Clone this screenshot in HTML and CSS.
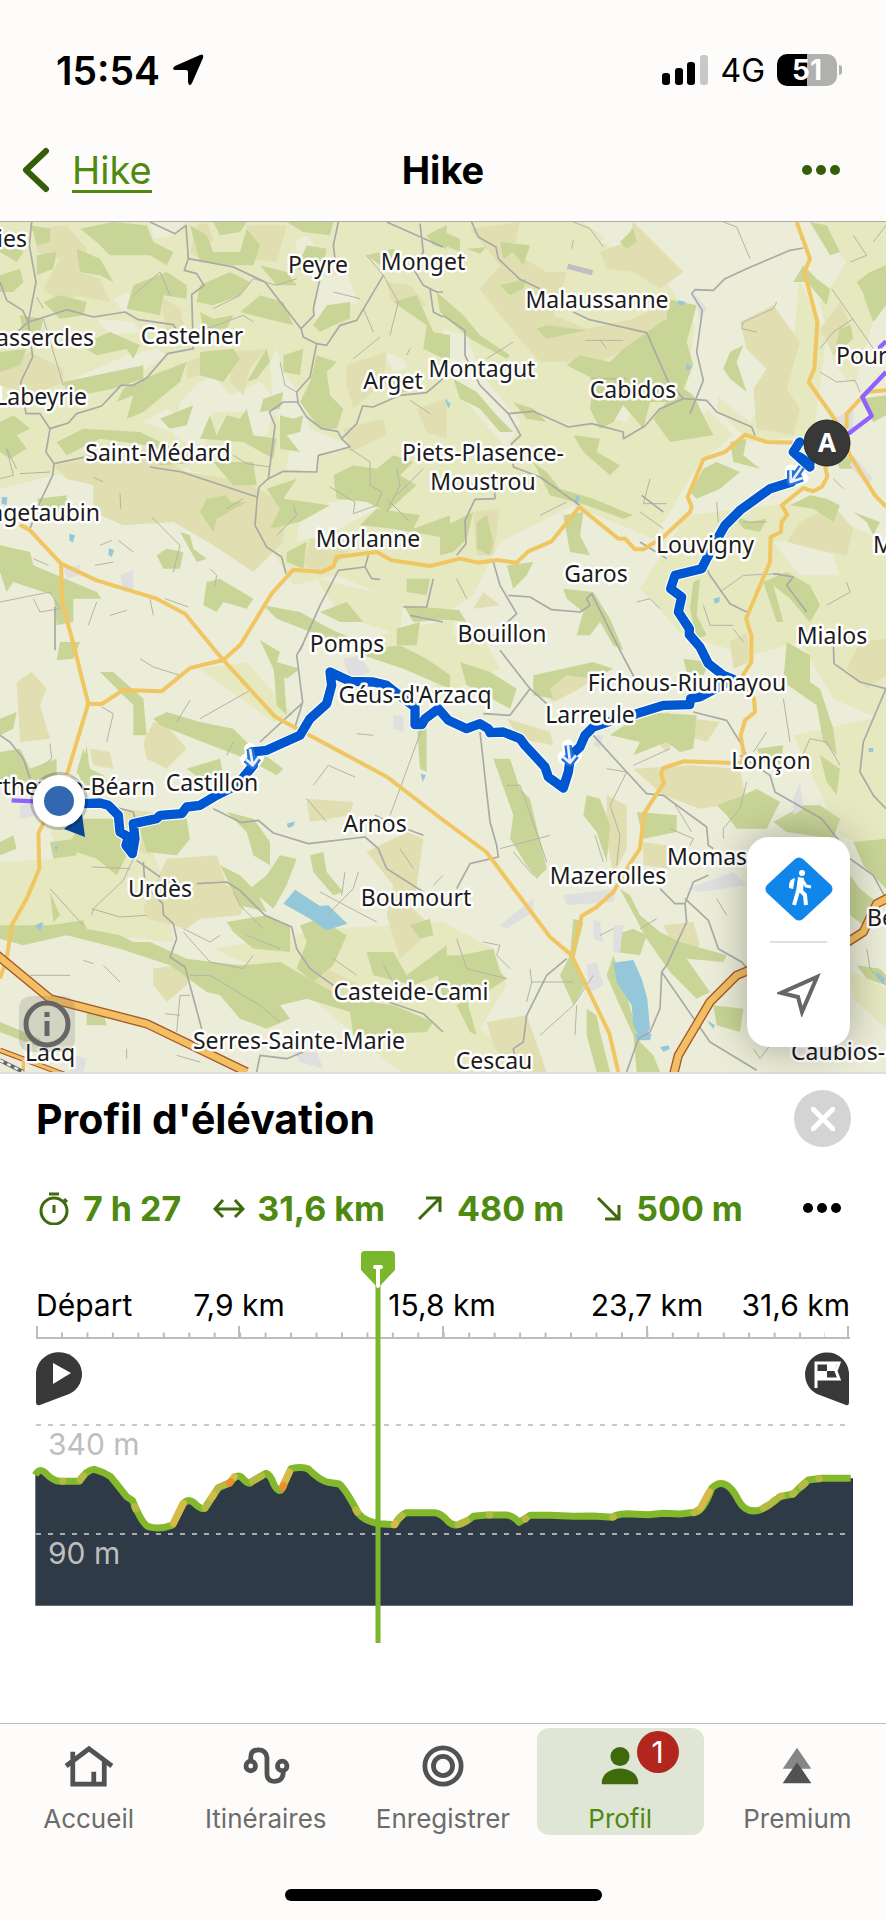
FILE: index.html
```
<!DOCTYPE html>
<html lang="fr">
<head>
    <meta charset="utf-8">
    <meta name="viewport" content="width=device-width, initial-scale=1.0">
    <title>Hike</title>
    <link rel="stylesheet" href="styles.css">
</head>
<body>
    <header>
        <div class="status">
            <div class="status-left">
                <span class="clock">15:54</span>
                <svg width="32" height="32" viewBox="0 0 32 32"><path d="M28 1Q32-1 31 4L20 29Q17 34 16 28V18Q16 16 14 16H3Q-1 15 3 12Z"/></svg>
            </div>
            <div class="status-right">
                <svg width="46" height="30" viewBox="0 0 46 30">
                    <rect x="0" y="18" width="8" height="12" rx="3"/>
                    <rect x="13" y="13" width="8" height="17" rx="3"/>
                    <rect x="25" y="7" width="8" height="23" rx="3"/>
                    <rect x="38" y="0" width="8" height="30" rx="3" fill="#c8c8c8"/>
                </svg>
                <span class="network">4G</span>
                <span class="battery">51</span>
            </div>
        </div>
        <nav class="navbar">
            <a class="back" href="#">
                <svg width="28" height="46" viewBox="0 0 28 46"><path d="M24 4 L4 23 L24 42" fill="none" stroke="#355e08" stroke-width="6" stroke-linecap="round" stroke-linejoin="round"/></svg>
                <span>Hike</span>
            </a>
            <h1>Hike</h1>
            <button class="more" aria-label="Plus">
                <svg width="38" height="10" viewBox="0 0 38 10" fill="#355e08"><circle cx="5" cy="5" r="5"/><circle cx="19" cy="5" r="5"/><circle cx="33" cy="5" r="5"/></svg>
            </button>
        </nav>
    </header>

    <main>
        <section class="map">
            <svg class="map-canvas" viewBox="0 0 886 850">
                <rect width="886" height="850" fill="#ebedd8"/>
                <svg width="886" height="850" viewBox="0 0 2658 2550">
                    <defs>
                        <path id="hike" d="M2399 660L2380 690 2430 735M2399 705L2430 725M2375 780L2310 800 2220 865 2175 910 2155 945 2120 1010 2105 1040 2025 1060 2012 1100 2045 1125 2035 1170 2068 1220 2068 1238 2100 1275 2125 1325 2170 1360 2200 1372 2100 1425 2072 1430 2069 1448 1990 1450 1910 1475 1830 1498 1780 1515 1755 1540 1740 1575 1712 1600 1705 1650 1690 1698 1645 1665 1635 1635 1575 1570 1560 1550 1510 1530 1470 1532 1465 1520 1440 1505 1400 1520 1345 1495 1315 1460 1275 1490 1265 1508 1245 1508 1245 1455 1210 1430 1160 1390 1120 1380 1050 1378 990 1350 995 1390 980 1445 930 1490 900 1540 800 1585 755 1590 760 1630 710 1690 650 1720 600 1750 560 1755 545 1775 480 1780 470 1790 400 1805 405 1850 397 1895 378 1870 385 1845 360 1830 355 1780 325 1750 300 1743 250 1745"/>
                        <path id="arrows" d="M2405 735L2375 778M2372 745V780L2408 768M1704 1570L1710 1620M1690 1605L1710 1622 1728 1600M750 1580L758 1628M738 1612L758 1630 774 1608"/>
                        <path id="a65" d="M-10 2198L150 2330 440 2405 740 2550"/>
                        <path id="a64" d="M2020 2560L2035 2500 2130 2340 2210 2260 2270 2235 2450 2220 2590 2130 2630 2045 2670 2025"/>
                    </defs>
                    <!-- fields -->
                    <g class="field">
                        <path d="M0 0H1329V1180L1220 1150L1010 1060 880 1090 800 960 740 800 560 740 160 760 0 800Z"/>
                        <path d="M1329 0H1900L1800 60 2050 160 2090 260 2060 500 2200 640 2100 720 1960 950 1720 850 1500 960 1420 1120 1329 1180Z"/>
                        <path d="M2200 240L2400 180 2480 340 2440 640 2250 660 2150 560Z"/>
                        <path d="M1920 1100L2060 880 2400 840 2658 960V1500L2500 1430 2400 1260 2250 1300 2050 1240Z"/>
                        <path d="M2450 0L2658 0V160L2560 500 2500 420 2460 240 2540 120Z"/>
                        <path d="M600 1340L740 1320 880 1480 820 1500Z"/>
                        <path d="M0 1920L350 1900 500 2000 520 2160 200 2130 0 2110Z"/>
                        <path d="M640 2180L1000 2120 1329 2100 1480 2180 1520 2290 1440 2420 1600 2550H1200L900 2300Z"/>
                        <path d="M2380 1540L2658 1480V1900L2520 1840Z"/>
                        <path d="M2540 2240L2658 2300V2420L2560 2330Z"/>
                        <path d="M1140 1240L1360 1190V1290L1180 1330Z"/>
                        <path d="M950 1070L1210 1130 1200 1240 1020 1180Z"/>
                        <path d="M1329 1240L1440 1230 1500 1340 1329 1420 1260 1330Z"/>
                        <path d="M150 1820L420 1780 500 2000 200 1960Z"/>
                    </g>
                    <g class="open">
                        <path d="M600 480L640 460 690 520 780 480 830 540 800 640 740 650 730 570 640 570 610 700 520 640 540 540Z"/>
                        <path d="M810 420L830 380 850 450 900 520 930 620 1050 670 960 700 950 750 860 740 870 660 820 560Z"/>
                        <path d="M960 170L1040 150 1075 250 1030 240 980 280 940 290Z"/>
                        <path d="M885 60L920 40 950 80 940 120 890 90Z"/>
                        <path d="M220 470L380 400 470 380 500 400 440 440 280 480Z"/>
                        <path d="M340 230L380 210 410 250 370 270Z"/>
                        <path d="M900 860L1050 830 1150 850 1000 930 890 960Z"/>
                        <path d="M1150 390L1210 410 1220 440 1180 450Z"/>
                        <path d="M450 0L560 0 520 40 460 50Z"/>
                        <path d="M290 290L400 300 420 330 330 340Z"/>
                        <path d="M1329 320L1400 340 1440 450 1560 600 1520 680 1400 540 1329 400Z"/>
                        <path d="M1750 0L2300 0 2400 120 2380 400 2250 600 2150 520 2100 600 2080 300 2000 180 1830 60Z"/>
                        <path d="M1780 500L1860 470 1920 520 1880 600 1800 580Z"/>
                        <path d="M1600 1000L1800 980 1880 1100 1700 1190 1540 1130Z"/>
                        <path d="M2320 960L2480 940 2520 1060 2400 1060Z"/>
                        <path d="M2480 460L2560 480 2560 560 2500 560Z"/>
                        <path d="M500 560L560 600 540 640 430 600Z"/>
                    </g>
                    <g class="heath">
                        <path d="M110 20L200 10 260 80 240 150 300 170 330 240 230 220 190 250 130 200 180 110 110 90Z"/>
                        <path d="M590 10L620 0 640 50 600 110 570 90Z"/>
                        <path d="M740 10L860 10 830 120 760 110Z"/>
                        <path d="M0 430L90 390 190 440 190 480 100 520 0 490Z"/>
                        <path d="M690 390L800 380 750 440 730 520 690 480Z"/>
                        <path d="M160 730L430 680 560 750 740 780 860 850 850 960 760 1050 640 970 520 900 370 910 280 870 280 790 200 770Z"/>
                        <path d="M1040 430L1160 390 1150 480 1060 560 1040 490Z"/>
                        <path d="M1030 620L1150 590 1160 640 1050 690Z"/>
                        <path d="M930 950L1050 940 1040 1000 960 1060 910 1030Z"/>
                        <path d="M1160 180L1230 190 1280 250 1220 270 1170 230Z"/>
                        <path d="M1250 560L1340 530V650L1280 630Z"/>
                        <path d="M480 220L540 260 570 380 500 330Z"/>
                        <path d="M560 420L640 390 630 450 560 470Z"/>
                        <path d="M1410 20L1560 0 1540 90 1640 150 1700 150 1660 280 1760 320 1900 290 2020 230 1980 330 1800 420 1620 420 1540 330 1440 200 1500 130Z"/>
                        <path d="M1800 90L1880 60 1900 0 1960 60 2050 150 1980 200 1900 150 1820 140Z"/>
                        <path d="M2220 300L2320 250 2400 360 2360 500 2400 560 2380 640 2270 620 2260 500 2300 440 2240 380Z"/>
                        <path d="M2460 320L2520 240 2560 330 2500 400Z"/>
                        <path d="M2400 900L2500 850 2560 920 2540 1000 2480 990 2360 960Z"/>
                        <path d="M1420 870L1500 860 1480 1000 1430 1000Z"/>
                        <path d="M1450 1110L1500 1150 1420 1160Z"/>
                        <path d="M1600 1380L1700 1340 1790 1370 1720 1410 1660 1440Z"/>
                        <path d="M50 1380L95 1350 140 1400 120 1450 150 1550 60 1560Z"/>
                        <path d="M430 1560L460 1500 500 1510 560 1580 500 1640 440 1610Z"/>
                        <path d="M430 2060L500 1910 650 1900 680 1990 750 2010 720 2080 600 2090 560 2120 440 2090Z"/>
                        <path d="M460 2240L580 2220 560 2290 500 2340 460 2290Z"/>
                        <path d="M920 1730L1060 1740 1050 1780 930 1800Z"/>
                        <path d="M1100 1890L1220 1830 1270 1850 1240 2060 1300 2120 1200 2210 1160 2080 1180 1990Z"/>
                        <path d="M1900 1640L2070 1630 2220 1640 2240 1740 2100 1760 1990 1720Z"/>
                        <path d="M1930 1520L2000 1470 2060 1510 2000 1590Z"/>
                        <path d="M2080 1490L2160 1500 2120 1560 2060 1540Z"/>
                        <path d="M1820 1720L1880 1750 1880 1880 1840 1960 1820 1850Z"/>
                        <path d="M1990 2110L2080 2100 2100 2170 2040 2210Z"/>
                        <path d="M2190 1260L2240 1230 2250 1320 2200 1340Z"/>
                        <path d="M2580 1260L2658 1250V1360L2600 1400 2540 1340Z"/>
                        <path d="M1929 1860L2000 1870 2010 1940 1930 1930Z"/>
                        <path d="M1520 1490L1650 1530 1660 1570 1560 1550Z"/>
                        <path d="M270 1580L330 1590 340 1640 280 1630Z"/>
                        <path d="M1460 2400L1580 2380 1640 2550 1530 2550 1480 2470Z"/>
                        <path d="M960 2230L1080 2290 1040 2340 900 2280Z"/>
                        <path d="M360 1760L460 1770 450 1900 400 1880Z"/>
                    </g>
                    <!-- woods -->
                    <g class="wood">
                        <path d="M90 10L150 20 150 60 110 70 100 30Z"/>
                        <path d="M240 20L340 0 440 10 460 60 520 90 500 130 450 100 330 100 290 60Z"/>
                        <path d="M0 160L60 140 70 180 40 210 0 210Z"/>
                        <path d="M0 30L40 40 70 90 50 120 0 90Z"/>
                        <path d="M570 10L620 40 640 90 720 90 740 20 780 70 760 130 690 130 600 120Z"/>
                        <path d="M640 0L740 0 720 30 660 40Z"/>
                        <path d="M230 80L300 110 340 180 300 160 240 150Z"/>
                        <path d="M110 100L170 90 160 140 110 160Z"/>
                        <path d="M400 190L500 150 560 190 560 230 490 220 480 280 380 260Z"/>
                        <path d="M130 240L180 220 260 240 250 280 180 290Z"/>
                        <path d="M600 190L690 150 750 180 720 220 640 250 590 240Z"/>
                        <path d="M720 270L780 220 850 240 880 310 800 290Z"/>
                        <path d="M600 270L640 290 700 280 680 320 610 320Z"/>
                        <path d="M920 70L980 80 970 130 930 160 890 140Z"/>
                        <path d="M860 0L1000 0 990 40 910 30Z"/>
                        <path d="M780 130L860 150 890 190 830 190Z"/>
                        <path d="M980 250L1050 240 1050 290 1000 310 960 330 940 310Z"/>
                        <path d="M60 280L130 290 120 330 70 350Z"/>
                        <path d="M0 390L80 380 60 430 0 450Z"/>
                        <path d="M190 480L430 430 430 470 340 500 240 520 200 510Z"/>
                        <path d="M240 370L330 330 420 370 400 410 380 380 290 400Z"/>
                        <path d="M430 470L560 420 540 480 430 570 380 590 400 520 350 540 370 500Z"/>
                        <path d="M600 390L700 380 720 410 670 480 600 460Z"/>
                        <path d="M740 480L800 380 810 420 770 470Z"/>
                        <path d="M950 400L1010 420 980 450 990 520 1030 560 1010 620 960 620 900 540 930 480Z"/>
                        <path d="M850 400L910 380 900 460 850 450Z"/>
                        <path d="M790 530L850 510 840 560 780 570Z"/>
                        <path d="M170 660L250 620 420 630 540 690 640 690 640 720 480 730 440 670 300 650 200 700Z"/>
                        <path d="M0 600L40 580 90 620 50 640 80 680 30 710 0 690Z"/>
                        <path d="M480 590L580 550 560 610 510 620Z"/>
                        <path d="M630 580L650 640 680 580 720 590 740 560 760 640 830 650 820 710 730 660 600 650Z"/>
                        <path d="M840 580L880 590 910 580 900 630 860 640 900 690 840 680Z"/>
                        <path d="M640 720L760 720 770 790 700 790Z"/>
                        <path d="M620 830L680 820 690 840 740 840 650 890 640 930 600 870Z"/>
                        <path d="M800 800L890 770 850 830 990 850 900 900 810 920 840 860Z"/>
                        <path d="M1000 760L1060 730 1130 740 1180 700 1240 720 1200 760 1250 790 1160 870 1100 840 1010 830Z"/>
                        <path d="M1080 910L1130 860 1260 880 1240 920 1350 880V950L1180 920Z"/>
                        <path d="M1150 480L1200 470 1250 500 1180 520Z"/>
                        <path d="M1180 240L1250 220 1300 330 1350 340V420L1270 380 1280 310Z"/>
                        <path d="M1100 100L1180 80 1210 120 1170 150Z"/>
                        <path d="M1280 40L1340 10V80L1300 70Z"/>
                        <path d="M0 970L90 990 100 1030 290 1110 305 1130 220 1130 220 1200 170 1210 160 1120 40 1080 20 1110 0 1050Z"/>
                        <path d="M110 830L200 820 200 860 130 870Z"/>
                        <path d="M470 1000L500 980 550 990 540 1040 490 1040Z"/>
                        <path d="M540 930L570 940 580 980 620 1010 590 1020Z"/>
                        <path d="M620 1080L660 1070 760 1130 740 1160 670 1140 650 1170 610 1150Z"/>
                        <path d="M860 990L920 960 910 1040 860 1020Z"/>
                        <path d="M790 1150L900 1170 990 1220 1100 1270 1010 1260 830 1190Z"/>
                        <path d="M960 1170L1040 1140 1090 1200 1020 1200Z"/>
                        <path d="M1220 1070L1290 1070 1280 1120 1220 1110Z"/>
                        <path d="M1190 1220L1260 1200 1250 1270 1190 1270Z"/>
                        <path d="M1210 1150L1380 1165V1190L1240 1200Z"/>
                        <path d="M1310 20L1380 50 1380 90 1310 60Z"/>
                        <path d="M1400 80L1460 75 1440 95Z"/>
                        <path d="M1500 60L1590 70 1570 130 1540 90 1510 110Z"/>
                        <path d="M1860 60L1900 20 1910 60 1880 80Z"/>
                        <path d="M1500 190L1580 170 1570 200 1530 220Z"/>
                        <path d="M1310 210L1390 280 1440 340 1530 400 1520 410 1410 350 1320 270Z"/>
                        <path d="M1610 320L1640 310 1760 325 1640 350Z"/>
                        <path d="M2000 230L2090 250 2060 360 2080 430 2050 500 2080 520 2120 600 2140 640 2010 660 1960 590 2000 540 1950 540 1930 620 1870 550 1840 600 1800 620 1770 560 1780 470 1700 430 1740 400 1830 420 1870 380 1970 310 2000 290Z"/>
                        <path d="M2170 440L2190 390 2230 370 2210 420 2240 510 2190 470Z"/>
                        <path d="M2380 180L2410 130 2450 170 2490 200 2480 250 2420 180Z"/>
                        <path d="M2430 0L2480 10 2520 90 2490 100Z"/>
                        <path d="M2570 180L2610 150 2658 130V190L2600 230Z"/>
                        <path d="M2520 320L2550 310 2560 350 2500 400Z"/>
                        <path d="M2590 220L2658 180V250L2620 300Z"/>
                        <path d="M2580 530L2658 520V580L2620 600Z"/>
                        <path d="M1360 470L1430 510 1490 580 1540 630 1500 630 1440 560 1380 530Z"/>
                        <path d="M1540 540L1600 560 1640 600 1580 590Z"/>
                        <path d="M1720 640L1800 650 1790 690 1860 730 1830 760 1750 690Z"/>
                        <path d="M1600 720L1640 750 1680 800 1780 830 1900 880 1870 890 1760 850 1650 820Z"/>
                        <path d="M2070 810L2110 740 2150 720 2220 750 2160 800 2090 830Z"/>
                        <path d="M2190 660L2240 650 2230 700 2280 740 2200 720Z"/>
                        <path d="M2480 660L2540 700 2580 740 2520 740Z"/>
                        <path d="M2200 880L2250 900 2300 890 2280 930 2230 920Z"/>
                        <path d="M2370 850L2430 820 2480 830 2520 850 2500 900 2440 860Z"/>
                        <path d="M2560 870L2640 900 2620 940 2600 900Z"/>
                        <path d="M1320 920L1420 870 1400 950 1360 990 1320 1000Z"/>
                        <path d="M1430 900L1460 880 1480 960 1470 1000 1430 980Z"/>
                        <path d="M1520 1030L1600 1020 1580 1060 1540 1100Z"/>
                        <path d="M1690 880L1750 870 1740 940 1770 1000 1710 990Z"/>
                        <path d="M1690 1100L1780 1110 1830 1190 1870 1285 1840 1270 1800 1200 1770 1240 1730 1240 1750 1170 1700 1130Z"/>
                        <path d="M1320 1160L1380 1170 1400 1200 1320 1190Z"/>
                        <path d="M2080 1080L2100 1070 2090 1180 2120 1240 2090 1250 2070 1160Z"/>
                        <path d="M2290 1080L2360 1050 2430 1090 2460 1150 2430 1200 2370 1130 2320 1090 2350 1200 2330 1200Z"/>
                        <path d="M2360 1260L2430 1300 2430 1380 2460 1400 2500 1520 2510 1600 2470 1560 2450 1450 2350 1380Z"/>
                        <path d="M1380 1320L1470 1350 1550 1400 1530 1460 1400 1390Z"/>
                        <path d="M1600 1360L1780 1320 1840 1340 1780 1370 1700 1360 1650 1400 1660 1430 1600 1420Z"/>
                        <path d="M2050 1310L2130 1320 2110 1360 2060 1350Z"/>
                        <path d="M1830 1540L1930 1470 2090 1480 2080 1580 2040 1590 2000 1560 1900 1600 1920 1560Z"/>
                        <path d="M1480 1610L1530 1610 1560 1700 1590 1730 1640 1940 1610 1970 1580 1930 1530 1850 1540 1780Z"/>
                        <path d="M1760 1720L1800 1730 1830 1810 1820 1920 1790 1830 1750 1780Z"/>
                        <path d="M1910 1770L2030 1780 2030 1830 1930 1850Z"/>
                        <path d="M2150 1750L2230 1720 2270 1700 2340 1740 2300 1820 2210 1820 2180 1780Z"/>
                        <path d="M2320 1800L2410 1750 2460 1750 2520 1790 2500 1850 2360 1830Z"/>
                        <path d="M2270 1580L2350 1570 2340 1640 2290 1620Z"/>
                        <path d="M2460 1600L2520 1640 2510 1720 2480 1680Z"/>
                        <path d="M2560 1860L2658 1850V2000L2590 1930Z"/>
                        <path d="M2550 1960L2580 2000 2630 2040 2590 2110 2550 2080Z"/>
                        <path d="M1860 2000L1890 2020 1920 2080 1980 2130 2040 2160 2180 2200 2170 2220 2060 2210 2130 2310 2090 2330 2010 2250 1940 2150Z"/>
                        <path d="M1840 2140L1900 2120 1940 2140 1920 2200 1850 2190Z"/>
                        <path d="M1840 2200L1880 2320 1920 2460 1960 2500 1980 2550 1910 2550 1900 2440 1850 2330 1820 2260Z"/>
                        <path d="M1720 2090L1750 2100 1720 2220 1760 2280 1720 2350 1680 2260 1710 2200Z"/>
                        <path d="M1300 2200L1380 2200 1480 2180 1500 2250 1520 2270 1460 2310 1400 2280 1420 2340 1329 2330Z"/>
                        <path d="M1400 2330L1430 2440 1410 2430 1370 2350Z"/>
                        <path d="M1760 2360L1790 2380 1800 2430 1830 2550 1790 2550 1760 2440Z"/>
                        <path d="M2140 2350L2230 2360 2220 2430 2150 2410Z"/>
                        <path d="M2570 2230L2640 2240 2658 2260V2290L2600 2270Z"/>
                        <path d="M0 1490L50 1470 40 1520 0 1540Z"/>
                        <path d="M0 1590L60 1580 90 1640 170 1610 170 1690 60 1700 0 1670Z"/>
                        <path d="M180 1260L240 1260 220 1310 170 1315Z"/>
                        <path d="M250 1580L270 1640 310 1660 340 1700 270 1710 230 1650Z"/>
                        <path d="M0 1860L40 1840 50 1880 0 1900Z"/>
                        <path d="M300 1350L340 1350 430 1430 440 1540 400 1540 400 1450Z"/>
                        <path d="M460 1490L500 1470 600 1500 700 1520 740 1560 850 1640 830 1660 740 1610 660 1580 480 1510Z"/>
                        <path d="M480 1760L560 1790 570 1850 530 1900 440 1890 420 1820 460 1800Z"/>
                        <path d="M250 1790L340 1790 380 1900 350 1960 290 1910 200 1880Z"/>
                        <path d="M150 1860L230 1850 230 1900 160 1910Z"/>
                        <path d="M560 1640L660 1610 670 1660 600 1670Z"/>
                        <path d="M680 1770L760 1790 810 1860 810 1930 760 1900 740 1830Z"/>
                        <path d="M840 1900L890 1910 860 1990 820 2060 750 2000 800 1960Z"/>
                        <path d="M930 1900L970 1890 980 1950 1030 2010 1000 2020 940 1950Z"/>
                        <path d="M660 1930L720 1960 770 2010 800 2070 720 2050Z"/>
                        <path d="M0 2110L150 2110 250 2095 260 2120 360 2140 400 2160 450 2160 560 2210 720 2230 840 2220 980 2300 1050 2330 1180 2350 1300 2400 1280 2430 1060 2440 1050 2370 920 2330 840 2350 870 2390 800 2420 720 2390 660 2320 620 2310 510 2230 360 2180 200 2140 70 2170 0 2150Z"/>
                        <path d="M680 2100L800 2080 870 2110 870 2190 760 2180 700 2130Z"/>
                        <path d="M900 2110L960 2090 1040 2140 1000 2230 940 2280 890 2240 920 2160Z"/>
                        <path d="M1100 2190L1180 2190 1220 2260 1340 2170V2250L1240 2290 1120 2260Z"/>
                        <path d="M1230 2110L1290 2090 1300 2140 1260 2150Z"/>
                        <path d="M1250 1500L1280 1490 1280 1650 1260 1640Z"/>
                        <path d="M820 1330L850 1330 860 1480 830 1450Z"/>
                        <path d="M1060 1290L1200 1270 1280 1310 1350 1360V1400L1210 1340Z"/>
                        <path d="M780 1254L840 1290 830 1320 900 1340 860 1370 820 1340Z"/>
                        <path d="M260 1570L270 1650 240 1680Z"/>
                        <path d="M150 2010L180 2080 160 2100Z"/>
                        <path d="M0 2400L120 2450 130 2480 0 2430Z"/>
                        <path d="M260 2360L310 2370 320 2410 260 2410Z"/>
                    </g>
                    <g class="town">
                        <path d="M190 1040L240 1030 240 1060 200 1070Z"/><path d="M360 1060L400 1045 400 1100 370 1110Z"/>
                        <path d="M1030 1310L1080 1300 1110 1350 1050 1370Z"/><path d="M1180 1480L1210 1480 1210 1530 1180 1520Z"/>
                        <path d="M2500 590L2560 560 2560 640 2500 640Z"/><path d="M2560 700L2620 770 2600 790 2550 730Z"/>
                        <path d="M1690 2020L1850 2000 1840 2040 1700 2050Z"/><path d="M1780 2090L1800 2100 1810 2160 1780 2150Z"/>
                        <path d="M1840 2110L1870 2110 1860 2190 1840 2190Z"/><path d="M1760 2230L1790 2220 1810 2290 1770 2310Z"/>
                        <path d="M1500 2110L1600 2030 1600 2070 1520 2120Z"/><path d="M2380 1730L2400 1680 2410 1760 2380 1780Z"/>
                        <path d="M2060 2000L2200 1950 2240 1990 2100 2010Z"/><path d="M1790 1540L1810 1540 1800 1580 1780 1570Z"/>
                        <path d="M60 1750L120 1740 110 1780 60 1790Z"/><path d="M2080 210L2120 260 2100 290Z"/>
                        <path d="M1705 125L1780 145 1775 160 1700 140Z" fill="#bfbfc1"/>
                        <path d="M880 2490L950 2490 970 2540 900 2520Z"/><path d="M220 2500L260 2510 250 2550 210 2550Z"/>
                    </g>
                    <g class="water">
                        <path d="M850 2045L885 2003 960 2052 985 2050 1042 2105 980 2125 930 2090Z"/>
                        <path d="M1840 2222L1900 2214 1925 2270 1942 2330 1950 2420 1925 2455 1900 2410 1895 2350 1850 2280Z"/>
                        <path d="M5 825L22 825 20 850 5 845Z"/><path d="M208 935L225 940 218 962 208 955Z"/><path d="M327 978L342 985 335 1005 325 998Z"/>
                        <path d="M2035 235L2058 240 2050 250 2035 248Z"/><path d="M2060 425L2075 435 2065 445 2058 440Z"/>
                        <path d="M1335 530L1352 545 1345 560Z"/><path d="M1730 820L1741 825 1730 848 1722 840Z"/>
                        <path d="M2140 1130L2160 1125 2158 1140 2145 1145Z"/><path d="M1262 1655L1278 1660 1268 1680Z"/>
                        <path d="M860 1805L885 1798 880 1812 865 1818Z"/><path d="M163 1875L175 1870 170 1890Z"/>
                        <path d="M105 2110L130 2100 120 2128Z"/><path d="M1980 2475L2005 2470 2010 2480 1990 2490Z"/>
                        <path d="M2120 2395L2145 2410 2140 2420Z"/><path d="M2630 2248L2655 2270 2650 2285 2630 2265Z"/>
                        <path d="M1905 2435L1955 2435 1950 2455 1910 2455Z"/><path d="M2606 1578L2620 1578 2620 1590 2606 1590Z"/>
                    </g>
                    <!-- tracks -->
                    <g class="track">
                        <path d="M110 225L130 260M130 290L190 490M400 220L480 150 510 220M640 260L720 220 760 170 830 190 890 170M620 320L730 280 760 300M1000 210L1080 230M1060 410L1140 345M1100 100L1150 160 1195 240 1170 340M1090 260L1120 330M1220 400L1230 380M840 420L855 490 890 510"/>
                        <path d="M0 770L40 760 20 680 50 740M60 755L150 750M280 765L310 780M360 815L362 860M455 885L540 970 520 1050M300 970L335 955M355 955L400 990M285 1030L340 1020M100 1010L145 1030M0 1140L150 1110 180 1160 120 1170 100 1130M290 1140L265 1210M330 1180L380 1165M450 1130L460 1180M495 1130L565 1155M700 700L740 725 810 735M680 860L730 830M990 795L1065 840 1060 875 1130 850 1145 810 1110 790 1110 720 1050 680M1190 740L1200 790 1160 870M1160 830L1225 895M1270 740L1190 820M880 850L890 880 830 940M1230 535L1290 575M630 1040L650 1060 645 1090"/>
                        <path d="M1720 0L1770 20 1810 75M1715 80L1720 55M1755 355L1870 355M1800 355L1820 380M1770 470L1880 470M1540 360L1460 410M2400 50L2410 50M2495 200L2620 380M2560 290L2500 330 2460 380M2170 0L2210 15 2250 110M2270 330L2225 320 2230 300 2320 260 2330 240M2460 450L2510 480 2565 475 2580 510M1620 880L1700 840M1930 845L1950 770M1930 845L2000 845M1920 870L1990 920M2150 840L2155 900M2230 900L2300 900M2500 770L2530 800M1910 1140L1950 1130 1980 1160M2160 1110L2230 1060 2340 1055M2110 1150L2130 1210 2200 1210M2200 1220L2230 1260M2540 1080L2550 1110 2480 1150M1370 1070L1400 1130M2620 60L2658 10M2560 40L2600 100 2550 120"/>
                        <path d="M420 1310L460 1335 540 1360M530 1500L570 1435M600 1490L750 1405M305 1455L340 1475 320 1560M680 1600L700 1560M150 1565L155 1610 130 1630M940 1690L985 1630 1065 1665M920 1730L980 1800M275 2080L280 2060 370 1975 400 1910M275 1935L390 1940M275 2060L360 2085 440 2080M150 2000L250 2110M700 2010L720 2050 790 2120M740 2140L840 2180M550 2130L630 2220 730 2240 760 2200M550 2120L630 2160 660 2140M570 2260L630 2260 780 2350 840 2400M1000 2210L1070 2260M1150 2230L1190 2300M90 2260L210 2260M310 2230L360 2280M250 2215L280 2225M530 2430L540 2320 570 2320M495 2375L540 2380M530 2500L600 2520M380 2480L380 2510M960 2010L1130 2100M980 2080L1060 2000 1075 1950M1035 1950L1025 2020M1200 1880L1240 1940M1280 1480L1200 1700 1170 1780M1070 1535L1120 1540M1300 1990L1329 1960"/>
                        <path d="M1370 2150L1400 2240 1520 2270M1450 2160L1500 2170 1490 2200 1530 2240M1590 2240L1595 2280 1720 2280M1595 2280L1580 2340M1620 2440L1720 2350 1780 2260M1725 2440L1730 2350M1520 1690L1560 1690 1620 1860 1640 1920M1500 1880L1650 1840M1540 1890L1600 1960M1785 1840L1810 1920M1820 1640L1880 1650 1830 1750 1860 1840 1850 1930M2240 1680L2220 1760 2170 1820 2170 1850M2010 1820L2080 1850 2070 1870M2020 1740L2075 1830M2390 1640L2430 1550 2480 1560 2520 1630M2350 1430L2370 1560M1900 1630L2010 1580M2260 1590L2300 1530M1800 2140L1840 2120M1920 2120L1970 2090M2150 2030L2180 2080M2600 2180L2610 2240 2658 2290M2260 2480L2280 2510 2310 2470"/>
                    </g>
                    <!-- lanes -->
                    <g class="lane">
                        <path d="M95 0L88 70 108 180 85 300 98 405 62 480 78 575 120 575 150 620 138 690 162 725 158 760 120 840 90 920"/>
                        <path d="M0 180L20 235 68 265 85 300 118 290 200 263 280 285 375 270 415 293 520 308 528 320"/>
                        <path d="M85 300L40 340M450 0L525 35 558 10 565 110 553 145 590 155 612 190 575 218 580 380 503 395 440 468 400 490 363 490 305 552 230 575 205 603 150 620"/>
                        <path d="M565 110L700 135 795 180 903 320 910 345 950 365 930 465 890 510 895 545 920 585 965 620 1013 628 1025 650 1050 675 955 700 950 750 850 748 805 770 825 610 808 570 850 540 895 540"/>
                        <path d="M805 770L777 795 772 825 765 910 800 975 845 1005 858 1055M162 725L280 700M450 735L545 750 772 825"/>
                        <path d="M1015 0L1000 70 1005 110M960 170L940 260 942 280 903 320M950 365L980 370 1020 310 1070 295 1150 160M1160 0L1329 75M1260 5L1270 90 1240 140 1270 190 1310 210 1329 210M1290 200L1300 270 1329 285M1025 650L1070 605 1088 552 1120 555 1200 520 1280 512 1329 470"/>
                        <path d="M900 1285L960 1150 1015 1045 1095 1035 1105 1000M1095 1035L1115 1070 1140 1072M1210 1155L1280 1155 1300 1070M1230 1180L1329 1200M165 1155L165 1285"/>
                        <path d="M1415 0L1435 45 1488 75 1495 110 1560 172 1640 210M1720 270L1765 292 1940 332 2005 480 2050 530 2120 535 2150 570 2255 615 2265 640"/>
                        <path d="M2050 530L1980 560 1935 612 1870 650 1870 630 1775 605 1705 615 1600 568 1525 575 1440 490 1395 400 1395 325 1329 280M1525 575L1562 640 1535 665 1540 735 1620 765 1740 850"/>
                        <path d="M2410 78L2370 85 2240 140 2175 170 2140 205 2085 203 2075 215 2107 265 2090 390 2110 475 2070 575M1480 750L1485 830 1425 832 1395 895 1398 965 1370 1000M1480 1020L1500 1090 1550 1175 1480 1240M1525 1120L1590 1125 1655 1163 1740 1170 1770 1150 1760 1130 1775 1115 1860 1285 1910 1380"/>
                        <path d="M2110 1020L2130 1060 2190 1145 2240 1170M2320 1055L2380 1065 2360 1090 2420 1170M2220 1600L2310 1660 2325 1710 2465 1790 2520 1860M2500 1260L2502 1325 2580 1380 2658 1400 2590 1560 2580 1650 2620 1720 2658 1760M1920 960L2000 1010M1990 870L1925 820"/>
                        <path d="M1500 1285L1590 1400 1640 1445M1590 1400L1530 1480 1450 1475M1440 1530L1470 1800 1490 1870 1495 1905 1410 1925 1370 2000M1780 1540L1880 1650 1940 1715 1990 1720 2120 1815 2125 1870 2140 1880M2080 1470L2180 1495 2220 1560 2240 1600"/>
                        <path d="M1980 2000L2025 2045 2055 2045 2080 1980 2125 1960M2055 2030L2125 2095 2155 2180 2225 2220 2260 2260M2055 2045L2060 2100 2000 2230 1985 2250 1980 2360 1950 2430 1915 2450 1880 2550M1985 2250L2130 2460 2270 2545M2550 1910L2620 1960 2658 2030M1700 2210L1640 2260 1580 2380 1570 2460 1540 2480 1550 2550M910 1265L890 1300 908 1440 885 1515M905 1445L780 1560"/>
                        <path d="M590 1985L680 1980 720 2005 795 2080 875 2115 890 2180 930 2240 1000 2290M410 1915L480 1965M430 1920L435 1990 488 2045 490 2078 520 2105 530 2150 510 2205 555 2235 605 2420M640 1760L725 1802 775 1795 820 1833 925 1865 1095 1845 1135 1880 1160 1940 1270 2010M0 1540L30 1560 70 1610 90 1670M290 1740L400 1770 405 1790M770 2550L780 2500 860 2510 910 2490M1165 2340L1270 2375 1329 2430M1125 1780L1165 1800 1270 1840"/>
                    </g>
                    <!-- main roads -->
                    <g class="road">
                        <path d="M60 908L90 925 183 1025 290 1075 470 1130 555 1175 645 1285 670 1314 825 1484 1160 1664 1329 1794 1459 1890 1650 2145 1715 2200 1828 2434 1855 2550"/>
                        <path d="M183 1025L187 1140 225 1285 265 1445 200 1660 115 1834 118 1940 80 2030 35 2110 20 2210 0 2270"/>
                        <path d="M265 1445L305 1446 370 1404 485 1408 570 1338 670 1314 720 1270 815 1115 880 1043 965 1050 1000 1034 1010 1005 1130 990 1175 1015 1290 1032 1380 1010 1435 1022 1490 1014 1550 1022 1585 988 1655 958 1738 855 1855 950 1875 950 1905 982 1930 982 1990 945 2070 870 2075 855 2063 825 2110 712 2175 690 2235 638 2300 660 2400 662"/>
                        <path d="M2390 0L2430 110 2413 150 2452 300 2443 440 2426 480 2510 600 2550 700 2625 820 2658 855"/>
                        <path d="M2540 620L2540 575 2600 510 2658 505"/>
                        <path d="M2475 730L2482 765 2465 795 2440 808 2410 798 2345 850 2362 878 2345 900 2343 930 2312 945 2310 1020 2238 1190 2254 1240 2254 1320 2225 1365 2262 1430 2265 1470 2235 1495 2222 1540 2232 1600 2224 1624 2050 1618 1990 1638 1983 1655 1992 1682 1932 1775 1920 1880 1890 1925 1840 2010 1790 2055 1745 2082 1718 2195"/>
                    </g>
                    <g class="motorway-edge">
                        <use href="#a65"/>
                        <use href="#a64"/>
                        <path d="M0 2485L200 2560" stroke-width="16"/>
                    </g>
                    <g class="motorway">
                        <use href="#a65"/>
                        <use href="#a64"/>
                        <path d="M0 2485L200 2560M70 2510V2550" stroke-width="10"/>
                    </g>
                    <path d="M0 2515L70 2550" stroke="#666" stroke-width="12"/>
                    <path d="M0 2515L70 2550" stroke="#eee" stroke-width="7" stroke-dasharray="12"/>
                    <!-- tracks of the other days -->
                    <path class="other-day" d="M2545 635L2615 582 2587 525 2658 450M2640 385V375L2658 358M35 1735L100 1738"/>
                    <!-- the hike -->
                    <use href="#hike" class="route-edge"/>
                    <use href="#arrows" class="route-edge"/>
                    <use href="#hike" class="route"/>
                    <use href="#arrows" class="direction-edge"/>
                    <use href="#arrows" class="direction"/>
                </svg>
                <g class="labels">
                    <text x="318" y="51">Peyre</text>
                    <text x="423" y="48">Monget</text>
                    <text x="192" y="122">Castelner</text>
                    <text x="393" y="167">Arget</text>
                    <text x="158" y="239">Saint-Médard</text>
                    <text x="368" y="325">Morlanne</text>
                    <text x="347" y="430">Pomps</text>
                    <text x="597" y="86">Malaussanne</text>
                    <text x="482" y="155">Montagut</text>
                    <text x="633" y="176">Cabidos</text>
                    <text x="483" y="239">Piets-Plasence-</text>
                    <text x="483" y="268">Moustrou</text>
                    <text x="705" y="331">Louvigny</text>
                    <text x="596" y="360">Garos</text>
                    <text x="502" y="420">Bouillon</text>
                    <text x="832" y="422">Mialos</text>
                    <text x="415" y="481">Géus-d'Arzacq</text>
                    <text x="687" y="469">Fichous-Riumayou</text>
                    <text x="590" y="501">Larreule</text>
                    <text x="771" y="547">Lonçon</text>
                    <text x="707" y="643">Momas</text>
                    <text x="608" y="662">Mazerolles</text>
                    <text x="416" y="684">Boumourt</text>
                    <text x="411" y="778">Casteide-Cami</text>
                    <text x="494" y="847">Cescau</text>
                    <text x="212" y="569">Castillon</text>
                    <text x="375" y="610">Arnos</text>
                    <text x="160" y="675">Urdès</text>
                    <text x="50" y="839">Lacq</text>
                    <text x="299" y="827">Serres-Sainte-Marie</text>
                    <g text-anchor="end">
                        <text x="27" y="25">ies</text>
                        <text x="94" y="124">assercles</text>
                        <text x="87" y="183">Labeyrie</text>
                        <text x="100" y="299">agetaubin</text>
                        <text x="155" y="573">rthez-de-Béarn</text>
                    </g>
                    <g text-anchor="start">
                        <text x="836" y="142">Pour</text>
                        <text x="873" y="331">M</text>
                        <text x="867" y="704">Be</text>
                        <text x="791" y="838">Caubios-</text>
                    </g>
                </g>
                <circle cx="827" cy="221" r="23" fill="#383838" stroke="#222" stroke-width="1"/>
                <text class="pin-letter" x="827" y="230">A</text>
                <path d="M82 592L85 615 64 607Z" fill="#0b4595"/>
                <circle cx="59" cy="579" r="29" fill="#000" opacity=".2"/>
                <circle cx="59" cy="579" r="26" fill="#fff"/>
                <circle cx="59" cy="579" r="15" fill="#3168b0"/>
            </svg>
            <button class="info" aria-label="Informations">
                <svg width="48" height="48" viewBox="0 0 48 48"><circle cx="24" cy="24" r="21" fill="none" stroke="#666" stroke-width="5"/><path d="M24 12V17M24 21V36" stroke="#666" stroke-width="5"/></svg>
            </button>
            <div class="map-tools">
                <button aria-label="Randonnée">
                    <svg width="68" height="64" viewBox="0 0 68 64">
                        <path d="M30 2Q34-1 38 2L66 28Q69 32 66 36L38 62Q34 65 30 62L2 36Q-1 32 2 28Z" fill="#1186ea"/>
                        <circle cx="37" cy="16" r="3" fill="#fff"/>
                        <path d="M30 21Q24 22 24 29V31L28 32Z" fill="#fff"/>
                        <path d="M33 34L29 48M35 33L40 38 41 48" fill="none" stroke="#fff" stroke-width="4"/>
                        <path d="M38 24L41 29 46 30" fill="none" stroke="#fff" stroke-width="3"/>
                        <path d="M33 20L39 21 38 35 31 35Z" fill="#fff"/>
                    </svg>
                </button>
                <hr>
                <button aria-label="Me localiser">
                    <svg width="44" height="44" viewBox="0 0 44 44"><path d="M40 4L25 39 21 24 4 20Z" fill="none" stroke="#666" stroke-width="4"/></svg>
                </button>
            </div>
        </section>

        <section class="profile">
            <div class="profile-head">
                <h2>Profil d'élévation</h2>
                <button class="close" aria-label="Fermer">
                    <svg width="24" height="24" viewBox="0 0 24 24"><path d="M2 2L22 22M22 2L2 22" stroke="#fff" stroke-width="5" stroke-linecap="round"/></svg>
                </button>
            </div>
            <div class="stats">
                <span class="stat">
                    <svg width="34" height="34" viewBox="0 0 34 34"><circle cx="17" cy="20" r="13"/><path d="M12 3H22M17 14V22M27 8L30 11"/></svg>
                    7 h 27
                </span>
                <span class="stat">
                    <svg width="32" height="34" viewBox="0 0 32 34"><path d="M2 18H30M10 9L2 18 10 26M22 9L30 18 22 26"/></svg>
                    31,6 km
                </span>
                <span class="stat">
                    <svg width="28" height="34" viewBox="0 0 28 34"><path d="M2 28L23 7M9 7H23V21"/></svg>
                    480 m
                </span>
                <span class="stat">
                    <svg width="28" height="34" viewBox="0 0 28 34"><path d="M2 7L23 28M9 28H23V14"/></svg>
                    500 m
                </span>
                <button class="stats-more" aria-label="Plus">
                    <svg width="38" height="10" viewBox="0 0 38 10"><circle cx="5" cy="5" r="5"/><circle cx="19" cy="5" r="5"/><circle cx="33" cy="5" r="5"/></svg>
                </button>
            </div>
            <svg class="chart" viewBox="0 0 886 400">
                <g class="distance">
                    <text x="36" y="71">Départ</text>
                    <text x="239" y="71" text-anchor="middle">7,9 km</text>
                    <text x="442" y="71" text-anchor="middle">15,8 km</text>
                    <text x="647" y="71" text-anchor="middle">23,7 km</text>
                    <text x="850" y="71" text-anchor="end">31,6 km</text>
                </g>
                <g stroke="#bcbcbc" stroke-width="2" fill="none">
                    <path d="M36 93H850M37 81V93M239 81V93M443 81V93M647 81V93M848 81V93"/>
                    <path d="M61 90H825" stroke-width="5" stroke-dasharray="2 23.45"/>
                </g>
                <path d="M36 128A23 22 0 1 1 69 149L40 160Q36 161 36 157Z" fill="#383838"/>
                <path d="M53 118L71 128 53 139Z" fill="#fff"/>
                <path d="M849 128A22 22 0 1 0 817 149L846 160Q849 161 849 157Z" fill="#383838"/>
                <path d="M816 143V118H839L836 126 839 134H816" fill="none" stroke="#fff" stroke-width="3"/>
                <path d="M827 118H837L835 126H827ZM817 126H827V133H817Z" fill="#fff"/>
                <path d="M36 180H846" stroke="#c8c8c8" stroke-width="2" stroke-dasharray="5 7"/>
                <svg y="135" width="886" height="230" viewBox="0 0 2658 690">
                    <path fill="#2e3a46" d="M106 677V285Q118 262 135 278 Q160 304 180 304H238Q260 270 283 268Q310 275 332 290L380 350 398 362Q425 430 445 440Q480 450 518 435L550 370Q565 355 580 367Q605 392 615 384L655 323 690 308Q710 280 725 292Q748 318 755 305Q770 295 798 280Q812 285 820 310Q838 345 848 322L873 266Q905 258 925 267Q960 302 985 307L1018 312Q1035 325 1075 400Q1095 425 1140 431L1185 434Q1200 405 1220 398H1305Q1325 400 1345 425Q1360 438 1375 434Q1395 430 1420 409L1460 405H1520Q1540 407 1557 427L1590 406H1650L1720 409 1780 408 1836 412Q1850 402 1880 401L1945 404 1990 400 2040 402 2085 397Q2110 395 2135 325Q2155 305 2175 313Q2195 320 2215 360Q2235 400 2275 391Q2300 385 2340 350L2380 342Q2400 320 2425 300L2465 295H2559V677Z"/>
                    <path class="slope" d="M106 285Q118 262 135 278 Q160 304 180 304H238Q260 270 283 268Q310 275 332 290L380 350 398 362Q425 430 445 440Q480 450 518 435L550 370Q565 355 580 367Q605 392 615 384L655 323 690 308Q710 280 725 292Q748 318 755 305Q770 295 798 280Q812 285 820 310Q838 345 848 322L873 266Q905 258 925 267Q960 302 985 307L1018 312Q1035 325 1075 400Q1095 425 1140 431L1185 434Q1200 405 1220 398H1305Q1325 400 1345 425Q1360 438 1375 434Q1395 430 1420 409L1460 405H1520Q1540 407 1557 427L1590 406H1650L1720 409 1780 408 1836 412Q1850 402 1880 401L1945 404 1990 400 2040 402 2085 397Q2110 395 2135 325Q2155 305 2175 313Q2195 320 2215 360Q2235 400 2275 391Q2300 385 2340 350L2380 342Q2400 320 2425 300L2465 295H2552"/>
                    <path class="slope easy" d="M188 304H189M240 300L250 287M404 380L407 387M615 384L655 323M672 315L680 312M757 304L785 288M1068 390L1072 397M1198 414L1206 407M1374 434L1400 422M1468 405H1470M1576 417L1578 415M1838 411H1840M2082 398L2098 388M2290 384L2310 372M2320 364L2325 360M2340 350L2345 348M2378 342L2382 338M2404 320L2415 310M2456 296H2458"/>
                    <path class="slope medium" d="M520 430L550 370M635 353L640 345M700 294L703 290M848 318L868 276M1183 434L1186 430M2102 383L2128 335"/>
                    <path class="slope hard" d="M689 309L692 304M848 323L851 317"/>
                </svg>
                <path d="M36 289H846" stroke="#a9adb2" stroke-width="2" stroke-dasharray="5 7"/>
                <text class="altitude" x="48" y="210">340 m</text>
                <text class="altitude" x="48" y="319">90 m</text>
                <path d="M378 40V398" stroke="#7ab72c" stroke-width="5"/>
                <path d="M361 10Q361 6 365 6H391Q395 6 395 10V25L378 43 361 25Z" fill="#7ab72c"/>
                <path d="M375 22H381M378 22V41" stroke="#fff" stroke-width="4" stroke-linecap="round"/>
            </svg>
        </section>
    </main>

    <footer>
        <nav class="tabs">
            <a href="#">
                <svg width="52" height="44" viewBox="0 0 52 44"><path d="M2 22L26 4 50 22M9 7V41H42V17M31 41V28" fill="none" stroke="#525252" stroke-width="5"/></svg>
                Accueil
            </a>
            <a href="#">
                <svg width="52" height="44" viewBox="0 0 52 44" fill="none" stroke="#525252" stroke-width="5"><circle cx="10" cy="22" r="5"/><circle cx="43" cy="22" r="5"/><path d="M10 17V13Q10 5 18 5T27 13V30Q27 38 35 38T44 30V27"/></svg>
                Itinéraires
            </a>
            <a href="#">
                <svg width="52" height="44" viewBox="0 0 52 44" fill="none" stroke="#525252" stroke-width="5"><circle cx="26" cy="22" r="19"/><circle cx="26" cy="22" r="10"/></svg>
                Enregistrer
            </a>
            <a href="#" class="active">
                <svg width="52" height="44" viewBox="0 0 52 44" fill="#3e6a0b"><circle cx="26" cy="12" r="10"/><path d="M7 41V38C9 20 43 20 45 38V41Z"/></svg>
                Profil
                <span class="badge">1</span>
            </a>
            <a href="#">
                <svg width="52" height="44" viewBox="0 0 52 44"><path d="M26 3L41 25H11Z" fill="#868686"/><path d="M26 18L41 40H11Z" fill="#525252"/></svg>
                Premium
            </a>
        </nav>
        <div class="home-indicator"></div>
    </footer>
</body>
</html>
```
FILE: styles.css
```
* {
    box-sizing: border-box;
}
body {
    margin: 0;
    min-height: 100vh;
    display: flex;
    flex-direction: column;
    font-family: Inter, "Noto Sans", sans-serif;
    background: #fff;
    color: #000;
}
button {
    border: 0;
    padding: 0;
    background: none;
}
svg {
    display: block;
}
header {
    background: #fdfcfa;
    border-bottom: 1px solid #ababab;
}

/* status bar */
.status {
    display: flex;
    justify-content: space-between;
    align-items: center;
    height: 118px;
    padding: 22px 49px 0 56px;
}
.status-left,
.status-right {
    display: flex;
    align-items: center;
    gap: 12px;
}
.clock {
    font-size: 39px;
    font-weight: 600;
}
.network {
    font-size: 32px;
}
.battery {
    position: relative;
    width: 60px;
    height: 32px;
    border-radius: 10px;
    background: linear-gradient(to right, #000 50%, #b0b0ae 50%);
    color: #fff;
    font-size: 28px;
    font-weight: 700;
    line-height: 32px;
    text-align: center;
}
.battery::after {
    content: "";
    position: absolute;
    right: -5px;
    top: 11px;
    width: 3px;
    height: 10px;
    border-radius: 0 3px 3px 0;
    background: #b0b0ae;
}

/* navigation bar */
.navbar {
    display: grid;
    grid-template-columns: 1fr auto 1fr;
    align-items: center;
    height: 103px;
    padding: 0 46px 0 22px;
}
.back {
    display: flex;
    align-items: center;
    gap: 22px;
    color: #4f8a10;
    font-size: 38px;
    text-decoration: none;
}
.back span {
    padding-top: 3px;
    border-bottom: 3px solid #4f8a10;
    line-height: 40px;
}
h1 {
    margin: 0 0 0 24px;
    font-size: 38px;
    font-weight: 700;
}
.more {
    justify-self: end;
}

/* map */
.map {
    position: relative;
    border-bottom: 2px solid #dededc;
}
.map-canvas {
    width: 100%;
    height: auto;
}
.field { fill: #e6e8c0; }
.open { fill: #ebedd8; }
.heath { fill: #e1deb2; }
.wood { fill: #c9d597; }
.town { fill: #e0dfe0; }
.water { fill: #95c7da; }
.track,
.lane,
.road,
.motorway,
.motorway-edge,
.other-day,
.route,
.route-edge,
.direction,
.direction-edge {
    fill: none;
    stroke-linejoin: round;
}
.track {
    stroke: #b3b4a6;
    stroke-width: 3;
}
.lane {
    stroke: #a9a9a6;
    stroke-width: 5;
}
.road {
    stroke: #f0c662;
    stroke-width: 12;
}
.motorway-edge {
    stroke: #a8552a;
    stroke-width: 28;
}
.motorway {
    stroke: #f2c062;
    stroke-width: 20;
}
.other-day {
    stroke: #8f62ff;
    stroke-width: 13;
}
.route-edge {
    stroke: #fff;
    stroke-width: 35;
    stroke-linecap: round;
}
.route {
    stroke: #0057cf;
    stroke-width: 28;
    stroke-linecap: round;
}
.direction-edge {
    stroke: #2a72d4;
    stroke-width: 22;
}
.direction {
    stroke: #e6f0ff;
    stroke-width: 8;
}
.labels {
    font-family: "Noto Sans", sans-serif;
    font-size: 23px;
    fill: #1c1c1c;
    stroke: #fff;
    stroke-width: 5px;
    stroke-linejoin: round;
    paint-order: stroke;
    text-anchor: middle;
}
.pin-letter {
    font-family: "Noto Sans", sans-serif;
    font-size: 26px;
    font-weight: 700;
    fill: #fff;
    text-anchor: middle;
}
.info {
    position: absolute;
    left: 19px;
    bottom: 20px;
    padding: 4px;
    border-radius: 12px;
    background: rgba(100, 100, 90, 0.18);
}
.map-tools {
    position: absolute;
    right: 36px;
    bottom: 25px;
    width: 103px;
    height: 210px;
    display: flex;
    flex-direction: column;
    align-items: center;
    padding-top: 20px;
    border-radius: 22px;
    background: #fff;
    box-shadow: 0 0 40px rgba(0, 0, 0, 0.3);
}
.map-tools hr {
    width: 57px;
    margin: 20px 0 30px;
    border: 0;
    border-top: 2px solid #e0e0e0;
}

/* elevation profile */
.profile {
    position: relative;
    padding-top: 16px;
    background: #fff;
}
.profile-head {
    display: flex;
    justify-content: space-between;
    align-items: center;
    padding: 0 35px 0 36px;
}
h2 {
    margin: 0;
    font-size: 41px;
    line-height: 46px;
    font-weight: 700;
}
.close {
    display: grid;
    place-items: center;
    width: 57px;
    height: 57px;
    border-radius: 50%;
    background: #d4d4d4;
}
.stats {
    display: flex;
    align-items: center;
    gap: 32px;
    height: 40px;
    margin: 41px 45px 17px 37px;
}
.stat {
    display: flex;
    align-items: center;
    gap: 12px;
    color: #4f8a10;
    font-size: 34px;
    font-weight: 700;
    white-space: nowrap;
}
.stat svg {
    fill: none;
    stroke: #3e6a0b;
    stroke-width: 3;
}
.stats-more {
    margin-left: auto;
}
.chart {
    width: 100%;
    height: auto;
}
.distance,
.altitude {
    font-size: 30px;
}
.altitude {
    fill: #bebebe;
}
.slope {
    fill: none;
    stroke: #83b82c;
    stroke-width: 21;
    stroke-linejoin: round;
}
.easy { stroke: #b6ba42; stroke-linecap: round; }
.medium { stroke: #d8ba48; stroke-linecap: round; }
.hard { stroke: #ea8f2c; stroke-linecap: round; }

/* tab bar */
footer {
    margin-top: auto;
    background: #fdfcfa;
    border-top: 1px solid #bdbdbd;
}
.tabs {
    display: grid;
    grid-template-columns: repeat(5, 1fr);
    padding-top: 4px;
}
.tabs a {
    position: relative;
    display: flex;
    flex-direction: column;
    align-items: center;
    gap: 16px;
    height: 107px;
    margin: 0 5px;
    padding-top: 17px;
    border-radius: 12px;
    color: #6c6c6c;
    font-size: 26px;
    line-height: 32px;
    text-decoration: none;
}
.tabs .active {
    background: #dfe6d6;
    color: #4f8a10;
}
.badge {
    position: absolute;
    top: 3px;
    left: 100px;
    width: 42px;
    height: 42px;
    border-radius: 50%;
    background: #b3261e;
    color: #fff;
    font-size: 30px;
    line-height: 42px;
    text-align: center;
}
.home-indicator {
    width: 317px;
    height: 12px;
    margin: 54px auto 19px;
    border-radius: 6px;
    background: #000;
}
```
